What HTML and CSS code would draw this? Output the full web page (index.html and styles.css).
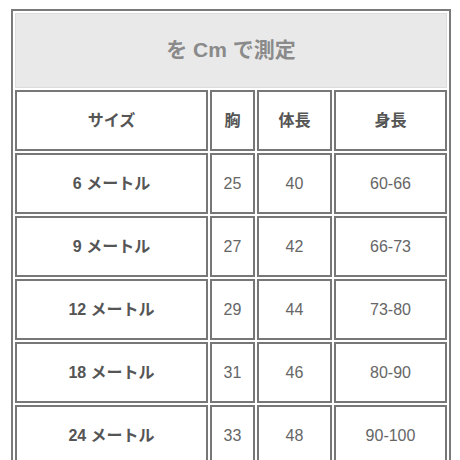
FILE: index.html
```html
<!DOCTYPE html>
<html lang="ja">
<head>
<meta charset="utf-8">
<link rel="stylesheet" href="styles.css">
</head>
<body>
<table class="size-table">
  <colgroup>
    <col class="c1">
    <col class="c2">
    <col class="c3">
    <col class="c4">
  </colgroup>
  <tr>
    <td class="caption" colspan="4">を Cm で測定</td>
  </tr>
  <tr>
    <th>サイズ</th>
    <th>胸</th>
    <th>体長</th>
    <th>身長</th>
  </tr>
  <tr><th>6 メートル</th><td>25</td><td>40</td><td>60-66</td></tr>
  <tr><th>9 メートル</th><td>27</td><td>42</td><td>66-73</td></tr>
  <tr><th>12 メートル</th><td>29</td><td>44</td><td>73-80</td></tr>
  <tr><th>18 メートル</th><td>31</td><td>46</td><td>80-90</td></tr>
  <tr><th>24 メートル</th><td>33</td><td>48</td><td>90-100</td></tr>
</table>
</body>
</html>
```

FILE: styles.css
```css
html, body {
  margin: 0;
  padding: 0;
  background: #ffffff;
  overflow: hidden;
}

body {
  font-family: "Liberation Sans", "Noto Sans CJK JP", sans-serif;
}

.size-table {
  margin: 9px 0 0 11px;
  border: 2px solid #7a7a7a;
  border-collapse: separate;
  border-spacing: 2px;
  table-layout: fixed;
  width: 440px;
}

.size-table th,
.size-table td {
  box-sizing: border-box;
  height: 61px;
  border: 2px solid #777777;
  text-align: center;
  vertical-align: middle;
  font-size: 16px;
  line-height: 18px;
  padding: 0;
}

.size-table th {
  font-weight: bold;
  color: #555555;
}

.size-table td {
  font-weight: normal;
  color: #666666;
}

.size-table td.caption {
  height: 75px;
  background: #e9e9e9;
  border: 1px solid #dddddd;
  color: #8a8a8a;
  font-size: 21px;
  font-weight: bold;
  padding-bottom: 2px;
}

.c1 { width: 193px; }
.c2 { width: 45px; }
.c3 { width: 75px; }
.c4 { width: 113px; }
```
